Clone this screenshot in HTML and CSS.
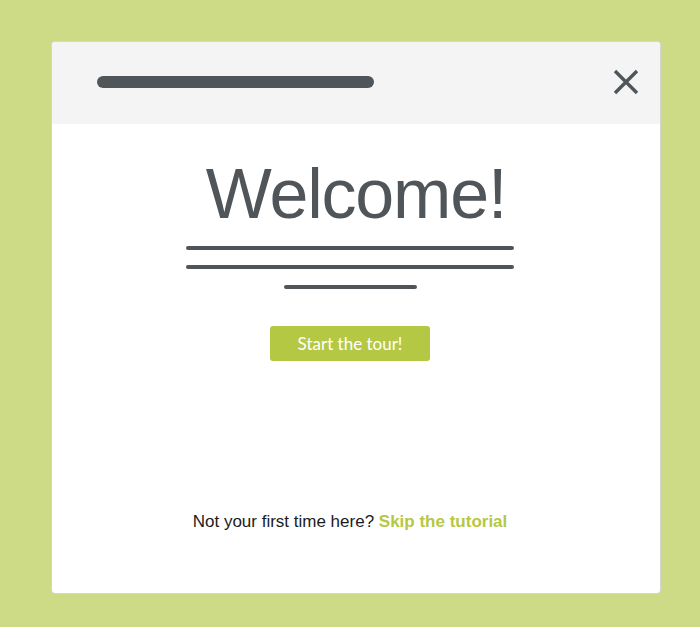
FILE: index.html
```html
<!DOCTYPE html>
<html>
<head>
<meta charset="utf-8">
<link rel="stylesheet" href="styles.css">
</head>
<body>
<div class="modal">
  <div class="modal-header">
    <div class="title-bar"></div>
    <button class="close" aria-label="Close">
      <svg width="26" height="26" viewBox="0 0 26 26"><path d="M2 2 L24 24 M24 2 L2 24" stroke="#50555a" stroke-width="3.4" stroke-linecap="butt" fill="none"/></svg>
    </button>
  </div>
  <div class="modal-body">
    <h1 class="welcome">Welcome!</h1>
    <div class="line line-long first"></div>
    <div class="line line-long second"></div>
    <div class="line line-short"></div>
    <button class="start">Start the tour!</button>
    <p class="footer">Not your first time here? <a class="skip" href="#">Skip the tutorial</a></p>
  </div>
</div>
</body>
</html>
```
FILE: styles.css
```css
html, body {
  margin: 0;
  padding: 0;
}
body {
  background: #cddb86;
  width: 700px;
  height: 627px;
  padding: 41px 0 0 51px;
  box-sizing: border-box;
  font-family: "Liberation Sans", Arial, sans-serif;
}
.modal {
  width: 610px;
  height: 553px;
  box-sizing: border-box;
  background: #fff;
  border: 1px solid #d3d5d1;
  border-radius: 4px;
  display: flex;
  flex-direction: column;
  overflow: hidden;
}
.modal-header {
  height: 82px;
  flex: none;
  background: #f3f4f3;
  display: flex;
  align-items: center;
  justify-content: space-between;
  padding: 0 21px 3px 45px;
  box-sizing: border-box;
}
.title-bar {
  width: 277px;
  height: 12px;
  border-radius: 6px;
  background: #50555a;
}
.close {
  border: 0;
  background: none;
  padding: 0;
  width: 26px;
  height: 26px;
  display: block;
}
.close svg { display: block; }
.modal-body {
  flex: 1;
  display: flex;
  flex-direction: column;
  align-items: center;
  padding: 30px 12px 61px 0;
}
.welcome {
  margin: 0;
  font-weight: 400;
  font-size: 70px;
  line-height: 80px;
  letter-spacing: -1.2px;
  color: #50555a;
  padding-left: 12px;
}
.line {
  height: 4px;
  border-radius: 2px;
  background: #50555a;
}
.line-long { width: 328px; }
.line.first { margin-top: 12px; }
.line.second { margin-top: 15px; }
.line-short { width: 133px; margin-top: 16px; }
.start {
  margin-top: 37px;
  width: 160px;
  height: 35px;
  border: 0;
  border-radius: 3px;
  background: #b5c844;
  color: #fff;
  font-family: "Lato", "Liberation Sans", sans-serif;
  font-weight: 400;
  font-size: 17px;
  padding: 0;
}
.footer {
  margin: auto 0 0;
  font-size: 17px;
  line-height: 20px;
  color: #1b1c1d;
}
.skip {
  color: #b5c844;
  font-weight: 700;
  text-decoration: none;
}
```
